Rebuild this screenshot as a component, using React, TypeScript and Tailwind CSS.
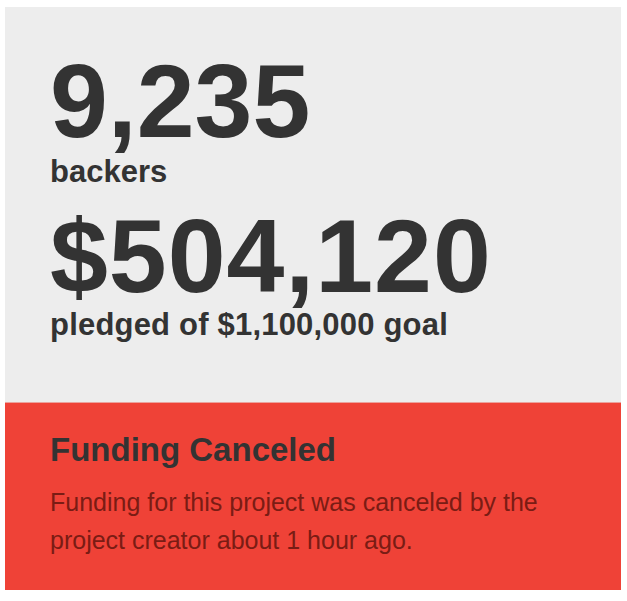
export default function App() {
  return (
    <div className="w-[627px] h-[601px] bg-white pt-[7px] pl-[5px]" style={{ fontFamily: '"Liberation Sans", Arial, sans-serif' }}>
      <div className="w-[616px] flex flex-col">
        <div className="bg-[#ededed] pt-[42px] pb-[62px] pl-[45px] text-[#333333] font-bold">
          <div className="text-[104px] leading-[104px]">9,235</div>
          <div className="mt-[3px] text-[31px] leading-[31px]">backers</div>
          <div className="mt-[17px] text-[104px] leading-[104px] tracking-[1px]">$504,120</div>
          <div className="mt-[1px] text-[31px] leading-[31px] tracking-[0.2px]">pledged of $1,100,000 goal</div>
        </div>
        <div className="bg-[#ef4237] border-t border-[#eba39d] pt-[30px] pb-[31px] pl-[45px] pr-[30px]">
          <div className="text-[33px] leading-[33px] font-bold text-[#333333]">Funding Canceled</div>
          <div className="mt-[17px] text-[25px] leading-[38px] text-[#7a1c14]">
            Funding for this project was canceled by the project creator about 1 hour ago.
          </div>
        </div>
      </div>
    </div>
  );
}
